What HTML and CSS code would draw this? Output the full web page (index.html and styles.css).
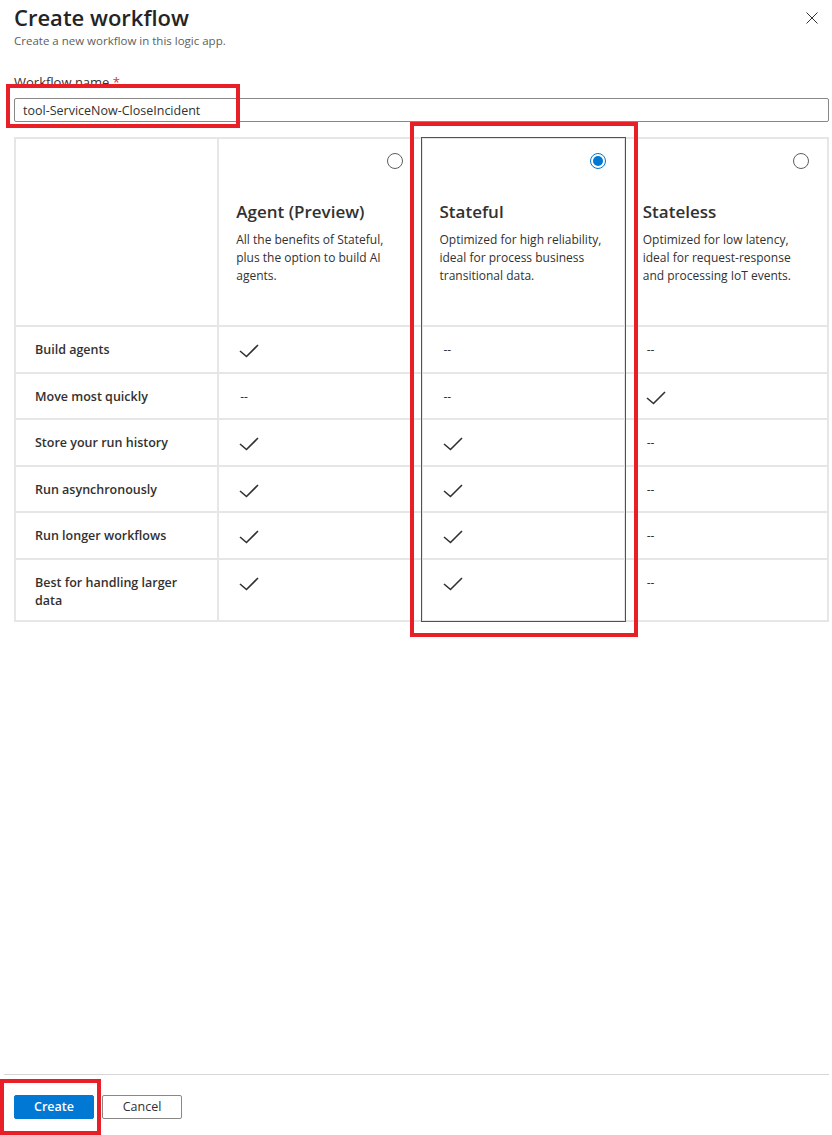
FILE: index.html
```html
<!DOCTYPE html>
<html lang="en">
<head>
<meta charset="utf-8">
<title>Create workflow</title>
<link rel="stylesheet" href="styles.css">
</head>
<body>
<div class="panel">
  <header class="head">
    <div class="head-text">
      <h1 class="title">Create workflow</h1>
      <p class="subtitle">Create a new workflow in this logic app.</p>
    </div>
    <button class="close" aria-label="Close">
      <svg width="12" height="12" viewBox="0 0 12 12"><path d="M0.5 0.5 L11.5 11.5 M11.5 0.5 L0.5 11.5" stroke="#323130" stroke-width="1" fill="none"/></svg>
    </button>
  </header>

  <div class="field">
    <label class="label">Workflow name <span class="req">*</span></label>
    <div class="input">tool-ServiceNow-CloseIncident</div>
  </div>

  <div class="grid">
    <div class="cell hcell"></div>
    <div class="cell hcell">
      <div class="radio-row"><span class="radio"></span></div>
      <h2 class="opt-title">Agent (Preview)</h2>
      <p class="opt-desc">All the benefits of Stateful, plus the option to build AI agents.</p>
    </div>
    <div class="cell hcell">
      <div class="radio-row"><span class="radio checked"></span></div>
      <h2 class="opt-title">Stateful</h2>
      <p class="opt-desc">Optimized for high reliability, ideal for process business transitional data.</p>
    </div>
    <div class="cell hcell">
      <div class="radio-row"><span class="radio"></span></div>
      <h2 class="opt-title">Stateless</h2>
      <p class="opt-desc">Optimized for low latency, ideal for request-response and processing IoT events.</p>
    </div>

    <div class="cell lbl">Build agents</div>
    <div class="cell val"><svg class="chk" viewBox="0 0 20 16"><path d="M1 9 L7.5 14.5 L19 3"/></svg></div>
    <div class="cell val"><span class="dash">--</span></div>
    <div class="cell val"><span class="dash">--</span></div>

    <div class="cell lbl">Move most quickly</div>
    <div class="cell val"><span class="dash">--</span></div>
    <div class="cell val"><span class="dash">--</span></div>
    <div class="cell val"><svg class="chk" viewBox="0 0 20 16"><path d="M1 9 L7.5 14.5 L19 3"/></svg></div>

    <div class="cell lbl">Store your run history</div>
    <div class="cell val"><svg class="chk" viewBox="0 0 20 16"><path d="M1 9 L7.5 14.5 L19 3"/></svg></div>
    <div class="cell val"><svg class="chk" viewBox="0 0 20 16"><path d="M1 9 L7.5 14.5 L19 3"/></svg></div>
    <div class="cell val"><span class="dash">--</span></div>

    <div class="cell lbl">Run asynchronously</div>
    <div class="cell val"><svg class="chk" viewBox="0 0 20 16"><path d="M1 9 L7.5 14.5 L19 3"/></svg></div>
    <div class="cell val"><svg class="chk" viewBox="0 0 20 16"><path d="M1 9 L7.5 14.5 L19 3"/></svg></div>
    <div class="cell val"><span class="dash">--</span></div>

    <div class="cell lbl">Run longer workflows</div>
    <div class="cell val"><svg class="chk" viewBox="0 0 20 16"><path d="M1 9 L7.5 14.5 L19 3"/></svg></div>
    <div class="cell val"><svg class="chk" viewBox="0 0 20 16"><path d="M1 9 L7.5 14.5 L19 3"/></svg></div>
    <div class="cell val"><span class="dash">--</span></div>

    <div class="cell lbl last">Best for handling larger data</div>
    <div class="cell val last"><svg class="chk" viewBox="0 0 20 16"><path d="M1 9 L7.5 14.5 L19 3"/></svg></div>
    <div class="cell val last"><svg class="chk" viewBox="0 0 20 16"><path d="M1 9 L7.5 14.5 L19 3"/></svg></div>
    <div class="cell val last"><span class="dash">--</span></div>

    <div class="selected-col"></div>
  </div>

  <footer class="footer">
    <button class="btn primary">Create</button>
    <button class="btn secondary">Cancel</button>
  </footer>

  <div class="mark mark-name"></div>
  <div class="mark mark-stateful"></div>
  <div class="mark mark-create"></div>
</div>
</body>
</html>
```

FILE: styles.css
```css
* { box-sizing: border-box; }
html, body { margin: 0; padding: 0; background: #ffffff; }
body {
  font-family: "Open Sans", "Noto Sans", "Liberation Sans", sans-serif;
  color: #323130;
}
.panel {
  position: relative;
  display: flex;
  flex-direction: column;
  height: 1135px;
  padding: 3px 3px 0 14px;
}
.head {
  display: flex;
  justify-content: space-between;
  align-items: flex-start;
}
.title {
  margin: 0;
  font-size: 22px;
  line-height: 28px;
  font-weight: 600;
  color: #242424;
}
.subtitle {
  margin: 2px 0 0;
  font-size: 11.5px;
  line-height: 16px;
  color: #605e5c;
}
.close {
  margin: 9px 11px 0 0;
  padding: 0;
  border: 0;
  background: none;
  width: 12px;
  height: 12px;
  display: block;
}
.close svg { display: block; }
.field { margin-top: 24px; }
.label {
  display: block;
  font-size: 13px;
  line-height: 18px;
  color: #323130;
  font-weight: 500;
}
.req { color: #d13438; }
.input {
  margin-top: 7px;
  height: 24px;
  border: 1px solid #8a8886;
  border-radius: 2px;
  padding: 0 8px;
  font-size: 12.5px;
  line-height: 23px;
  color: #323130;
}
.grid {
  position: relative;
  margin-top: 15px;
  display: grid;
  grid-template-columns: repeat(4, 1fr);
  grid-template-rows: repeat(7, auto);
  border-top: 2px solid #e6e6e6;
  border-left: 2px solid #e6e6e6;
}
.cell {
  border-right: 2px solid #e6e6e6;
  border-bottom: 2px solid #e6e6e6;
}
.hcell {
  height: 188px;
  padding: 14px 18px 0 17px;
}
.radio-row {
  display: flex;
  justify-content: flex-end;
  height: 16px;
}
.radio {
  width: 16px;
  height: 16px;
  border-radius: 50%;
  border: 1px solid #605e5c;
  display: flex;
  align-items: center;
  justify-content: center;
}
.radio.checked { border-color: #0078d4; }
.radio.checked::after {
  content: "";
  width: 10px;
  height: 10px;
  border-radius: 50%;
  background: #0078d4;
}
.opt-title {
  margin: 31px 0 0;
  font-size: 17px;
  line-height: 24px;
  font-weight: 600;
  color: #323130;
}
.opt-desc {
  margin: 7px 0 0;
  font-size: 12px;
  line-height: 18px;
  color: #323130;
}
.lbl {
  padding: 14px 19px 12.6px 19px;
  font-size: 12.5px;
  line-height: 18px;
  font-weight: 600;
  color: #323130;
}
.val {
  padding: 14px 20px 12.6px 20px;
  font-size: 12px;
  line-height: 18px;
}
.cell.last { padding-bottom: 10px; }
.dash { padding-left: 1px; color: #323130; }
.chk {
  display: block;
  width: 20px;
  height: 16px;
  margin-top: 1px;
}
.chk path {
  fill: none;
  stroke: #323130;
  stroke-width: 1.6;
}
.selected-col {
  position: absolute;
  grid-column: 3 / 4;
  grid-row: 1 / -1;
  top: -2px;
  left: -2px;
  right: 0;
  bottom: 0;
  border: 1px solid #0067b8;
  pointer-events: none;
}
.footer {
  margin-top: auto;
  margin-left: -10px;
  padding: 20px 0 16px 10px;
  border-top: 1px solid #d6d6d6;
  display: flex;
  gap: 8px;
}
.btn {
  width: 80px;
  height: 24px;
  border-radius: 2px;
  font-family: inherit;
  font-size: 12.5px;
  line-height: 22px;
  padding: 0;
}
.primary {
  background: #0078d4;
  border: 1px solid #0078d4;
  color: #ffffff;
  font-weight: 600;
}
.secondary {
  background: #ffffff;
  border: 1px solid #8a8886;
  color: #323130;
}
.mark {
  position: absolute;
  border: 4px solid #e81f27;
  pointer-events: none;
}
.mark-name { left: 6px; top: 84px; width: 234px; height: 44px; }
.mark-stateful { left: 410px; top: 122px; width: 228px; height: 515px; }
.mark-create { left: 0; top: 1079px; width: 101px; height: 56px; }
```
